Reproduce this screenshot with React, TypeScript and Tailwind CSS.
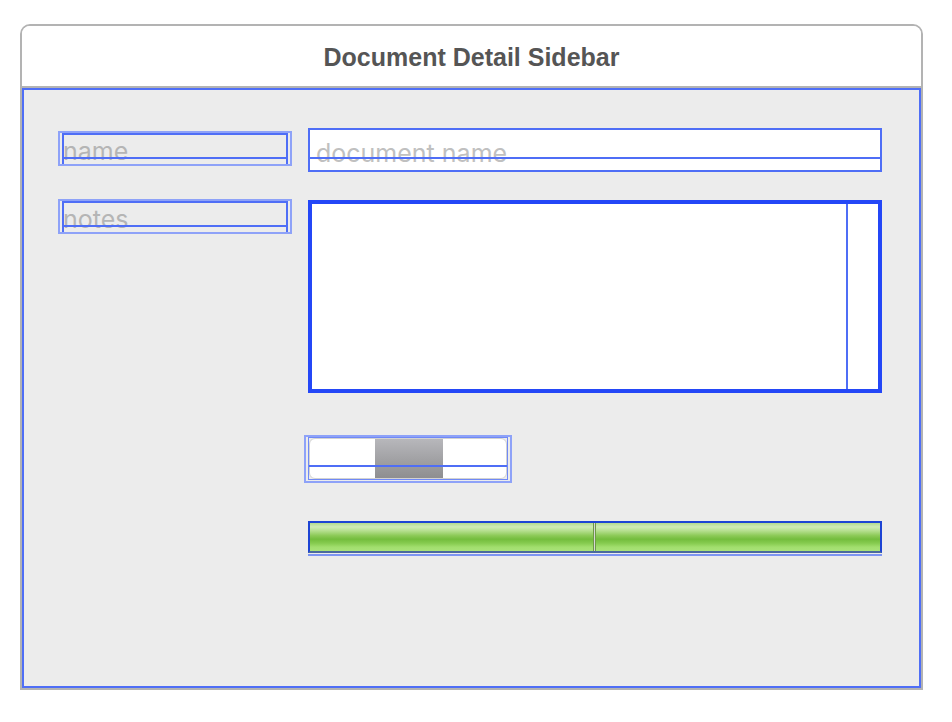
import React from 'react'

const LINE = 'border-[#4f6ef6]'

function FieldLabel({ text }: { text: string }) {
  return (
    <div className="w-[234px] h-[35px] border-2 border-[#8ea2f8] px-[2px]">
      <div className={`relative h-full border-x-2 border-t-2 ${LINE}`}>
        <span className="absolute left-[-1px] top-[1px] text-[25px] leading-[30px] text-[#b5b5b5]">{text}</span>
        <div className="absolute left-0 right-0 top-[22px] h-[2px] bg-[#4f6ef6]" />
      </div>
    </div>
  )
}

function NameField() {
  return (
    <div className={`relative w-[574px] h-[44px] border-2 ${LINE} bg-white`}>
      <span className="absolute left-[6px] top-[8px] text-[25px] leading-[30px] text-[#c0c0c0]">document name</span>
      <div className="absolute left-0 right-0 top-[27px] h-[2px] bg-[#4f6ef6]" />
    </div>
  )
}

function NotesArea() {
  return (
    <div className="w-[574px] h-[193px] border-4 border-[#2447f7] bg-white flex justify-end mt-[1px]">
      <div className={`w-[32px] h-full border-l-2 ${LINE}`} />
    </div>
  )
}

function Segmented() {
  return (
    <div className="ml-[-4px] w-[208px] h-[48px] border-2 border-[#8ea2f8]">
      <div className="relative mx-[2px] h-[43px] border border-[#7089f6]">
        <div className="flex h-[41px] rounded-[6px] border border-[#d2d2d2] bg-white overflow-hidden">
          <div className="w-[65px]" />
          <div className="w-[68px] bg-[linear-gradient(to_bottom,#b7b7bb,#8e8e90)]" />
          <div className="flex-1" />
        </div>
        <div className="absolute left-0 right-0 top-[27px] h-[2px] bg-[#4f6ef6]" />
      </div>
    </div>
  )
}

const GREEN =
  'bg-[linear-gradient(to_bottom,#b3da90_0%,#d0ebb6_14%,#b5df8e_28%,#8cca57_45%,#74bd3d_58%,#86cb4f_72%,#a2de6e_86%,#a9e378_100%)]'

function ProgressBar() {
  return (
    <div className="w-[574px] border-b-2 border-[#7d95f2] pb-[1px]">
      <div className="flex h-[32px] border-2 border-[#1d44d4] border-b-[#4a6a9e]">
        <div className={`w-[283px] ${GREEN}`} />
        <div className="w-px bg-[#6d9a45]" />
        <div className="w-px bg-[#d6d6d6]" />
        <div className="w-px bg-[#6d9a45]" />
        <div className={`flex-1 ${GREEN}`} />
      </div>
    </div>
  )
}

export default function App() {
  return (
    <div className="w-[952px] h-[722px] bg-white pt-[24px] pl-[20px]" style={{ fontFamily: 'Inter, "Noto Sans", sans-serif' }}>
      <div className="w-[903px] border-2 border-[#b3b3b3] rounded-t-[10px] overflow-hidden">
        <div className="h-[62px] bg-white border-b-2 border-[#b3b3b3] pt-[3px] flex items-center justify-center">
          <h1
            className="text-[25px] font-bold text-[#555555]"
            style={{ fontFamily: '"Liberation Sans", Arial, sans-serif' }}
          >
            Document Detail Sidebar
          </h1>
        </div>
        <div className="h-[600px] border-2 border-[#4f6ef6] bg-[#ececec] pl-[34px] pt-[38px]">
          <div className="flex gap-[16px]">
            <div className="pt-[3px]">
              <FieldLabel text="name" />
            </div>
            <NameField />
          </div>
          <div className="flex gap-[16px] mt-[27px] items-start">
            <FieldLabel text="notes" />
            <NotesArea />
          </div>
          <div className="ml-[250px] mt-[42px]">
            <Segmented />
          </div>
          <div className="ml-[250px] mt-[38px]">
            <ProgressBar />
          </div>
        </div>
      </div>
    </div>
  )
}
